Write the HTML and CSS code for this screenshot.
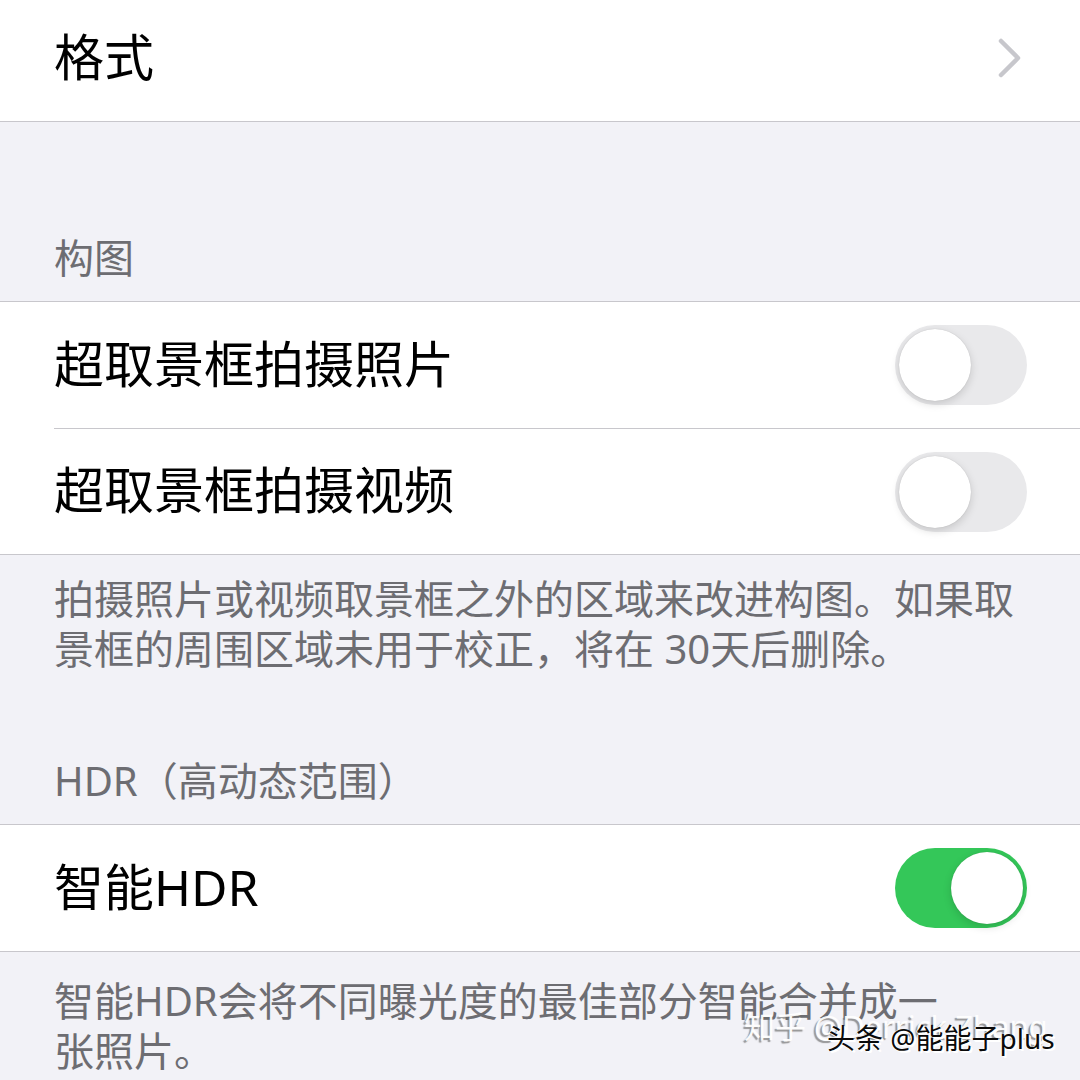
FILE: index.html
```html
<!DOCTYPE html>
<html>
	<head>
		<meta charset="utf-8" />
		<meta name="viewport" content="width=device-width, initial-scale=1.0" />

		<link rel="stylesheet" href="styles.css">
	</head>

	<body>
		<main class="settings">
			<ul class="group group-top">
				<li class="cell">
					<div class="cell-body">
						<span class="label">格式</span>
						<svg class="chevron" width="26" height="42" viewBox="0 0 26 42">
							<polyline points="4,4 21,21 4,38" />
						</svg>
					</div>
				</li>
			</ul>

			<h2 class="section-header">构图</h2>
			<ul class="group">
				<li class="cell">
					<div class="cell-body">
						<span class="label">超取景框拍摄照片</span>
						<span class="switch"></span>
					</div>
				</li>
				<li class="cell">
					<div class="cell-body">
						<span class="label">超取景框拍摄视频</span>
						<span class="switch"></span>
					</div>
				</li>
			</ul>
			<p class="section-footer">拍摄照片或视频取景框之外的区域来改进构图。如果取<br />景框的周围区域未用于校正，将在 30天后删除。</p>

			<h2 class="section-header">HDR（高动态范围）</h2>
			<ul class="group">
				<li class="cell">
					<div class="cell-body">
						<span class="label">智能HDR</span>
						<span class="switch switch-on"></span>
					</div>
				</li>
			</ul>
			<p class="section-footer section-footer-last">智能HDR会将不同曝光度的最佳部分智能合并成一<br />张照片。</p>
		</main>

		<div class="watermark watermark-zhihu">知乎 @Derrick Zhang</div>
		<div class="watermark watermark-toutiao">头条 @能能子plus</div>
	</body>
</html>
```

FILE: styles.css
```css
body {
	margin: 0;
	background: #f2f2f7;
	font-family: "Noto Sans", "Noto Sans CJK SC", sans-serif;
	overflow: hidden;
	height: 1080px;
	position: relative;
}

.settings {
	display: flex;
	flex-direction: column;
}



/**
 * Grouped table sections
 */
.group {
	list-style: none;
	margin: 0;
	padding: 0;

	background: #fff;
	border-top:    1px solid #c8c7cc;
	border-bottom: 1px solid #c8c7cc;
}

/* The first group is scrolled slightly past the top */
.group-top {
	margin-top: -6px;
	margin-bottom: 29px;
}

.cell {
	padding-left: 54px;
}

.cell-body {
	height: 126px;
	padding-right: 53px;

	display: flex;
	align-items: center;
	justify-content: space-between;
}

/* Inset separator between neighbouring cells */
.cell + .cell > .cell-body {
	border-top: 1px solid #c8c7cc;
	height: 125px;
}

/* CJK glyphs sit a little low in their line box, nudge them up */
.label {
	margin-bottom: 8px;
	font-size: 50px;
	color: #000;
	white-space: nowrap;
}

.chevron {
	margin-right: 4px;
}

.chevron polyline {
	fill: none;
	stroke: #c7c7cc;
	stroke-width: 4.5;
	stroke-linecap: round;
	stroke-linejoin: round;
}



/**
 * Headers and footers around the groups
 */
.section-header,
.section-footer {
	margin: 0;
	padding-left:  54px;
	padding-right: 54px;

	font-size:   40px;
	font-weight: normal;
	line-height: 50px;
	color: #6d6d72;
}

.section-header {
	padding-top:    82px;
	padding-bottom: 18px;
}

.section-footer {
	padding-top: 19px;
}

.section-footer-last {
	padding-top: 24px;
}



/**
 * Switches
 */
.switch {
	box-sizing: border-box;
	width:  132px;
	height: 80px;
	padding: 4px;
	border-radius: 40px;

	background: #e9e9eb;
	display: flex;
	justify-content: flex-start;
}

.switch::after {
	content: "";
	width:  72px;
	height: 72px;
	border-radius: 50%;

	background: #fff;
	box-shadow: 0 3px 8px rgba(0, 0, 0, 0.15), 0 0 1px rgba(0, 0, 0, 0.2);
}

.switch-on {
	background: #34c759;
	justify-content: flex-end;
}



/**
 * Watermarks stamped over the bottom corner
 */
.watermark {
	position: absolute;
	white-space: nowrap;
	line-height: 1;
}

.watermark-zhihu {
	left: 744px;
	top:  1011px;
	font-size: 31px;
	color: rgba(255, 255, 255, 0.95);
	text-shadow: -2px 2px 1px rgba(110, 110, 110, 0.7);
}

.watermark-toutiao {
	left: 827px;
	top:  1024px;
	font-size: 28px;
	color: #0a0a0a;
	text-shadow: 2px 2px 0 #fff, 1px 1px 0 #fff, -1px 0 0 #fff;
}
```
